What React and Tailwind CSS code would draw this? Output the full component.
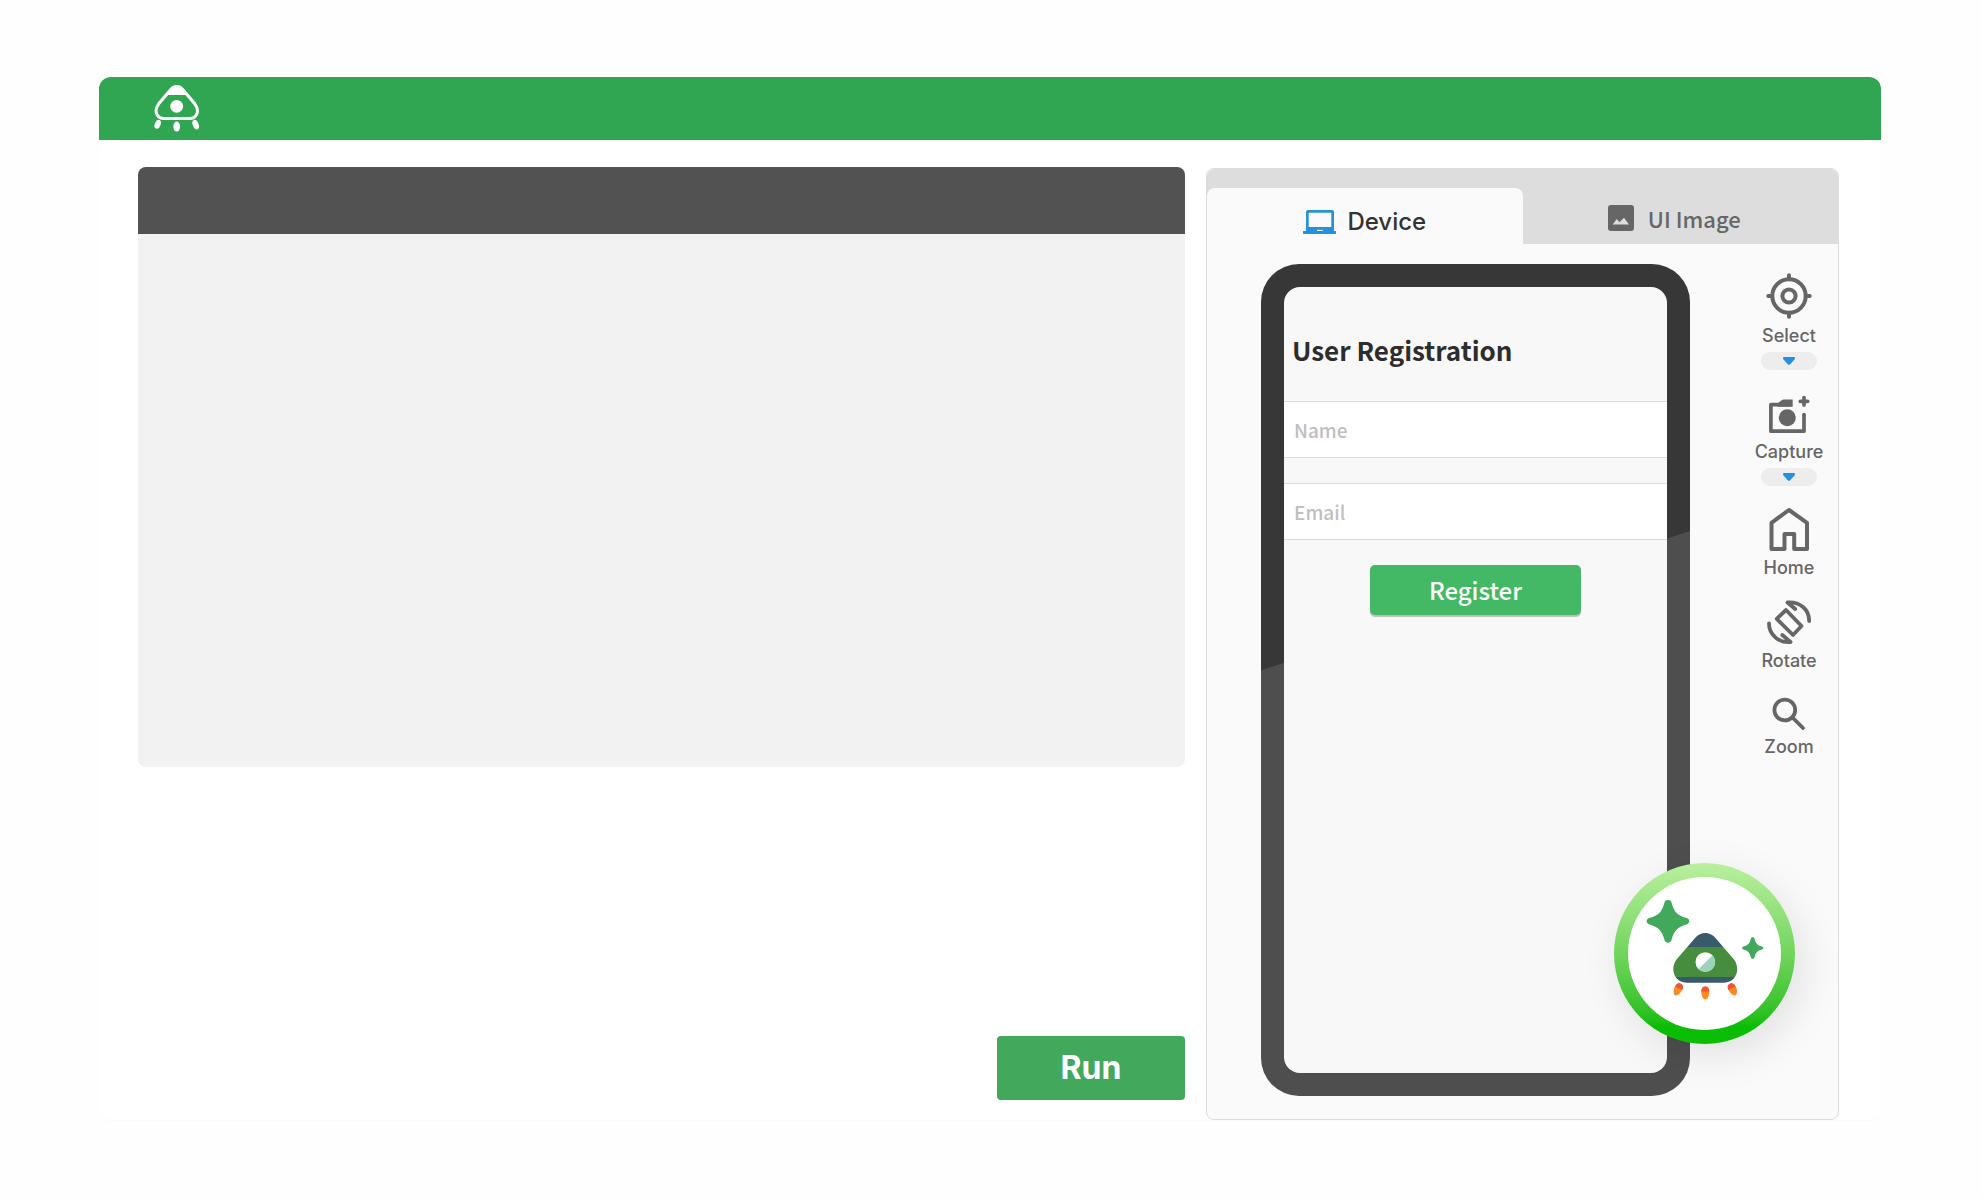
import React from 'react';

function ShipLogo() {
    return (
        <svg className="w-12 h-[50px]" viewBox="0 0 48 50" fill="none">
            <path d="M17.500 7C21.500 1 28 1 32 7L42.800 19.800C48.500 27.500 44 34.500 37.500 34.500H12C5.500 34.500 1 27.500 6.700 19.800Z" stroke="#fff" strokeWidth="3" />
            <path d="M15 11L18 6C21.500 1 28 1 31.500 6L34.500 11Z" fill="#fff" />
            <circle cx="24.700" cy="22.300" r="6.400" fill="#fff" />
            <ellipse cx="5.700" cy="40.300" rx="2.900" ry="4.600" transform="rotate(22 5.700 40.300)" fill="#fff" />
            <ellipse cx="24.700" cy="42.600" rx="3.300" ry="5" fill="#fff" />
            <ellipse cx="43.700" cy="40.700" rx="2.900" ry="5" transform="rotate(-22 43.700 40.700)" fill="#fff" />
        </svg>
    );
}

function LaptopIcon() {
    return (
        <svg className="w-[33px] h-6" viewBox="0 0 33 24" fill="#2590dd">
            <path
                fillRule="evenodd"
                d="M5 0h24q2 0 2 2v19h1.500q.5 0 .5.500v1.700q0 .8-.8.800H.8q-.8 0-.8-.8v-1.700q0-.5.500-.5H3V2q0-2 2-2zM5.700 2.700v14.300h22.600V2.700zM14 19.700v1.300h5.700v-1.300z"
            />
        </svg>
    );
}

function PictureIcon() {
    return (
        <svg className="w-[26px] h-[26px]" viewBox="0 0 26 26">
            <rect width="26" height="26" rx="3" fill="#666" />
            <path d="M4.700 19.500L8.800 14l2.600 3.200L16 12.800l5 6.700z" fill="#ddd" />
        </svg>
    );
}

function SelectIcon() {
    return (
        <svg className="w-[46px] h-[46px]" viewBox="0 0 46 46" fill="none" stroke="#666" strokeWidth="4">
            <circle cx="23" cy="23" r="16.700" />
            <circle cx="23" cy="23" r="6.600" />
            <path d="M23 2.300v4M23 39.700v4M2.300 23h4M39.700 23h4" strokeLinecap="round" />
        </svg>
    );
}

function CaptureIcon() {
    return (
        <svg className="w-[46px] h-[45px]" viewBox="0 0 46 45" fill="none" stroke="#666" strokeWidth="3.700">
            <path d="M25 14.700H4.900V41.200H38V24.500" strokeLinejoin="round" />
            <circle cx="38" cy="24.500" r="1.850" fill="#666" stroke="none" />
            <path d="M11.500 13.500l4.500-3.500q.7-.6 1.600-.6h9.100v7.400H11.500z" fill="#666" stroke="none" />
            <circle cx="21.300" cy="27.800" r="8.500" fill="#666" stroke="none" />
            <path d="M38 7.600v7.400M34.300 11.300h7.400" strokeLinecap="round" />
        </svg>
    );
}

function HomeIcon() {
    return (
        <svg className="w-[46px] h-[45px]" viewBox="0 0 46 45" fill="none" stroke="#666" strokeWidth="4">
            <path d="M5.500 16.800L23 4l18 12.800V43H28.200V28H18.500v15h-13z" strokeLinejoin="round" />
        </svg>
    );
}

function RotateIcon() {
    return (
        <svg className="w-[46px] h-11" viewBox="0 0 46 44" fill="none" stroke="#666" strokeWidth="3.800" strokeLinecap="round" strokeLinejoin="round">
            <path d="M20 10L10.700 18.800L27 35L35.500 26Z" />
            <path d="M29.200 9L21.500 2.500C34 1.500 43.200 9.500 43.200 21" />
            <path d="M16.300 35L24.500 42C12 43 3 34 3 23.500" />
        </svg>
    );
}

function ZoomIcon() {
    return (
        <svg className="w-[34px] h-[37px]" viewBox="0 0 34 37" fill="none" stroke="#666" strokeWidth="3.800">
            <circle cx="12.800" cy="17" r="10.400" />
            <path d="M20.500 24.500L31 35" strokeLinecap="round" />
        </svg>
    );
}

function AssistantShip() {
    return (
        <svg className="w-full h-full" viewBox="0 0 153 153">
            <defs>
                <clipPath id="hull">
                    <path d="M67.500 60.500C72.500 54.500 82 54.500 87 60.500L106 82.500C113 92 108 105.700 96 105.700H58.500C46.500 105.700 41.500 92 48.500 82.500Z" />
                </clipPath>
                <clipPath id="window">
                    <circle cx="77.300" cy="85" r="9.800" />
                </clipPath>
            </defs>
            {/* Sparkles */}
            <path d="M36.500 25.500C37.300 22.300 42.700 22.300 43.500 25.500C46 35 49.500 38.500 58.500 41C62.300 42.200 62.300 46.200 58.500 47.400C49.500 50 46 53.500 43.500 63C42.700 66.500 37.300 66.500 36.500 63C34 53.500 30.500 50 21.500 47.400C17.700 46.200 17.700 42.200 21.500 41C30.500 38.500 34 35 36.500 25.500Z" fill="#41a85c" />
            <path d="M122.900 61.500C123.400 59.800 126 59.800 126.500 61.500C127.700 66.500 129.500 68.200 134 69.500C135.900 70.200 135.900 71.800 134 72.500C129.500 73.800 127.700 75.500 126.500 80.500C126 82.200 123.400 82.200 122.900 80.500C121.700 75.500 119.900 73.800 115.400 72.500C113.500 71.800 113.500 70.200 115.400 69.500C119.900 68.200 121.700 66.500 122.900 61.500Z" fill="#41a85c" />
            {/* Ship */}
            <g clipPath="url(#hull)">
                <path d="M40 50h75v20H40z" fill="#385a6b" />
                <path d="M40 70h75v30H40z" fill="#478d3e" />
                <path d="M40 100h75v8H40z" fill="#385a6b" />
            </g>
            <g clipPath="url(#window)">
                <path d="M67 75h21v21H67z" fill="#fff" />
                <path d="M87.500 75.500V96H69.500V93z" fill="#9bd4b8" />
            </g>
            {/* Flames */}
            {[
                'translate(50 112.500) rotate(26)',
                'translate(77.300 116)',
                'translate(104.700 112.500) rotate(-26)',
            ].map((transform) => (
                <g key={transform} transform={transform}>
                    <path d="M-4-1C-4-5-2.500-6.500 0-6.500S4-5 4-1C4 3 2 6.500 0 6.500S-4 3-4-1z" fill="#f98a24" />
                    <path d="M-4-1.500C-3.800-5-2.500-6.500 0-6.500S3.800-5 4-1.500z" fill="#f05535" />
                </g>
            ))}
        </svg>
    );
}

const tools = [
    { name: 'Select', Icon: SelectIcon, menu: true },
    { name: 'Capture', Icon: CaptureIcon, menu: true },
    { name: 'Home', Icon: HomeIcon },
    { name: 'Rotate', Icon: RotateIcon },
    { name: 'Zoom', Icon: ZoomIcon },
];

function Tool({ name, Icon, menu }) {
    return (
        <div className="flex flex-col items-center gap-1">
            <button type="button" className="flex flex-col items-center gap-[5px]">
                <Icon />
                <span className="text-[18px] leading-6 font-medium text-[#666]">{name}</span>
            </button>
            {menu && (
                <button type="button" aria-label={`${name} options`} className="flex items-center justify-center w-14 h-[18px] rounded-full bg-[#ededed]">
                    <svg className="w-3 h-2" viewBox="0 0 12 8">
                        <path d="M1 0h10q1 0 1 1t-.7 1.800L7.200 7.200q-1.200 1.200-2.400 0L.7 2.800Q0 2 0 1t1-1z" fill="#2590dd" />
                    </svg>
                </button>
            )}
        </div>
    );
}

function Phone() {
    return (
        <div className="w-[429px] h-[832px] shrink-0 p-[23px] rounded-[38px] bg-[linear-gradient(162deg,#373737_386px,#4e4e4e_387px)]">
            <form className="flex flex-col h-full pt-[43px] rounded-2xl overflow-hidden bg-[#f8f8f8] font-['Noto_Sans_CJK_JP',sans-serif]">
                <h1 className="px-2 mb-[31px] text-[26px] leading-10 font-bold text-[#2d2d2d]">User Registration</h1>
                <input
                    type="text"
                    aria-label="Name"
                    placeholder="Name"
                    className="h-[57px] mb-[25px] px-[10px] border-y border-[#dcdcdc] bg-white text-[19px] font-medium placeholder:text-[#bfbfbf]"
                />
                <input
                    type="email"
                    aria-label="Email"
                    placeholder="Email"
                    className="h-[57px] mb-[25px] px-[10px] border-y border-[#dcdcdc] bg-white text-[19px] font-medium placeholder:text-[#bfbfbf]"
                />
                <button type="button" className="self-center w-[211px] h-[50px] rounded-[5px] bg-[#43b965] text-[24px] font-medium text-white shadow-[0_2px_1px_#bdbdbd]">
                    Register
                </button>
            </form>
        </div>
    );
}

export default function App() {
    return (
        <div className="min-h-screen bg-[#fefefe] pt-[77px] pl-[99px] pr-[101px] font-['Inter',sans-serif]">
            <div className="rounded-xl border-b border-[#fafafa] bg-white">
                {/* Header */}
                <header className="flex items-center h-[63px] px-[53px] rounded-t-xl bg-[#30a652]">
                    <ShipLogo />
                </header>

                <main className="flex gap-[21px] pt-[27px] pl-[39px] pr-[42px]">
                    {/* Editor */}
                    <section className="flex flex-col flex-1 justify-between items-end pb-5">
                        <div className="w-full h-[600px] rounded-lg overflow-hidden bg-[#f2f2f2]">
                            <div className="h-[67px] bg-[#525252]"></div>
                        </div>
                        <button type="button" className="w-[188px] h-16 rounded bg-[#41a85c] text-[32px] font-bold text-white">
                            Run
                        </button>
                    </section>

                    {/* Device panel */}
                    <section className="relative w-[633px] mt-px rounded-lg border border-[#dcdcdc] bg-[#fafafa]">
                        <div role="tablist" className="flex items-end h-[75px] rounded-t-lg bg-[#ddd]">
                            <button type="button" role="tab" aria-selected="true" className="flex items-center justify-center gap-[11px] w-1/2 h-14 pt-3 rounded-t-lg bg-[#fafafa] text-[24px] font-medium text-[#333]">
                                <LaptopIcon />
                                Device
                            </button>
                            <button type="button" role="tab" aria-selected="false" className="flex items-center justify-center gap-[14px] w-1/2 h-14 pt-1 pr-3 font-['Noto_Sans_CJK_JP',sans-serif] text-[22px] font-medium text-[#666]">
                                <PictureIcon />
                                UI Image
                            </button>
                        </div>
                        <div className="flex justify-between pt-5 pb-[23px] pl-[54px] pr-[9px]">
                            <Phone />
                            <div className="flex flex-col gap-5 w-20 pt-[9px]">
                                {tools.map((tool) => (
                                    <Tool key={tool.name} {...tool} />
                                ))}
                            </div>
                        </div>

                        {/* Floating assistant button */}
                        <button
                            type="button"
                            aria-label="Assistant"
                            className="absolute right-[43px] bottom-[75px] w-[181px] h-[181px] p-[14px] rounded-full bg-linear-to-b from-[#baf09f] to-[#0cbd05] to-90% shadow-[8px_12px_40px_rgba(0,0,0,0.1)]"
                        >
                            <span className="block w-full h-full rounded-full bg-white">
                                <AssistantShip />
                            </span>
                        </button>
                    </section>
                </main>
            </div>
        </div>
    );
}
